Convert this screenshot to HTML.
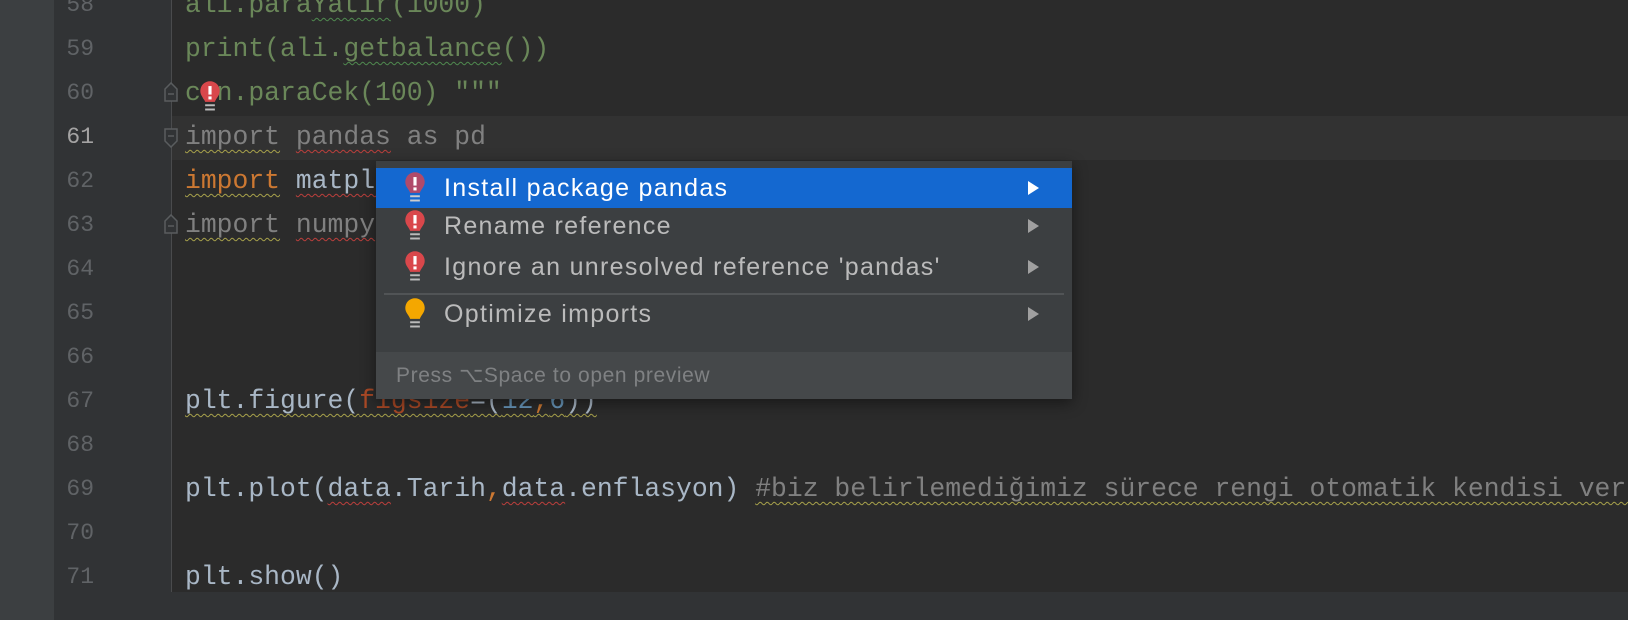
<!DOCTYPE html>
<html><head><meta charset="utf-8"><style>
*{margin:0;padding:0;box-sizing:border-box}
body{width:1628px;height:620px;background:#2b2b2b;position:relative;overflow:hidden;font-family:"Liberation Mono",monospace}
.strip{position:absolute;left:0;top:0;width:54px;height:620px;background:#3c3f41}
.gut{position:absolute;left:54px;top:0;width:118px;height:620px;background:#313335}
.gline{position:absolute;left:171px;top:0;width:1px;height:592px;background:#4a4b4d}
.cur{position:absolute;left:172px;top:116px;width:1456px;height:44px;background:#323232}
.bar{position:absolute;left:54px;top:592px;width:1574px;height:28px;background:#313335}
.ln{position:absolute;left:54px;width:40px;text-align:right;font-size:23px;color:#606366;line-height:44px}
.code{position:absolute;left:185px;font-size:26.4px;line-height:44px;white-space:pre;color:#a9b7c6}
.g{color:#6a8759}.gr{color:#808080}.k{color:#cc7832}.n{color:#6897bb}.p{color:#aa4926}
.wr{text-decoration:underline wavy #bc3f3c;text-decoration-thickness:1px;text-underline-offset:5px}
.wy{text-decoration:underline wavy #a8a24b;text-decoration-thickness:1px;text-underline-offset:5px}
.wg{text-decoration:underline wavy #4f8a4f;text-decoration-thickness:1px;text-underline-offset:5px}
.pop{position:absolute;left:376px;top:161px;width:696px;height:238px;background:#3c3f41;box-shadow:0 4px 14px rgba(0,0,0,.45);font-family:"Liberation Sans",sans-serif}
.row{position:absolute;left:0;width:696px;height:40px;color:#bbbbbb;font-size:25px;letter-spacing:1.3px;line-height:40px}
.row .t{position:absolute;left:68px}
.row .a{position:absolute;left:652px;top:13px;width:0;height:0;border-left:11px solid #a0a0a0;border-top:7px solid transparent;border-bottom:7px solid transparent}
.sel{background:#1468d0;color:#fff}
.sel .a{border-left-color:#fff}
.ic{position:absolute;left:28px;top:3px}
.sep{position:absolute;left:8px;top:132px;width:680px;height:2px;background:#515456}
.foot{position:absolute;left:0;top:191px;width:696px;height:47px;background:#45484a;color:#7f8183;font-size:21px;letter-spacing:0.6px;line-height:47px;padding-left:20px}
.fold{position:absolute;left:164px;width:14px;height:20px}
</style></head><body>
<div class="strip"></div><div class="gut"></div><div class="cur"></div><div class="gline"></div><div class="bar"></div>

<div class="ln" style="top:-17px">58</div>
<div class="ln" style="top:27px">59</div>
<div class="ln" style="top:71px">60</div>
<div class="ln" style="top:115px;color:#a4a3a3">61</div>
<div class="ln" style="top:159px">62</div>
<div class="ln" style="top:203px">63</div>
<div class="ln" style="top:247px">64</div>
<div class="ln" style="top:291px">65</div>
<div class="ln" style="top:335px">66</div>
<div class="ln" style="top:379px">67</div>
<div class="ln" style="top:423px">68</div>
<div class="ln" style="top:467px">69</div>
<div class="ln" style="top:511px">70</div>
<div class="ln" style="top:555px">71</div>

<svg class="fold" style="top:82px" viewBox="0 0 14 20"><path d="M1 19V7L7 1L13 7V19Z" fill="#313335" stroke="#5a5d5f" stroke-width="1.5"/><path d="M4 12H10" stroke="#5a5d5f" stroke-width="1.5"/></svg>
<svg class="fold" style="top:128px" viewBox="0 0 14 20"><path d="M1 1V13L7 19L13 13V1Z" fill="#313335" stroke="#5a5d5f" stroke-width="1.5"/><path d="M4 8H10" stroke="#5a5d5f" stroke-width="1.5"/></svg>
<svg class="fold" style="top:214px" viewBox="0 0 14 20"><path d="M1 19V7L7 1L13 7V19Z" fill="#313335" stroke="#5a5d5f" stroke-width="1.5"/><path d="M4 12H10" stroke="#5a5d5f" stroke-width="1.5"/></svg>

<div class="code g" style="top:-17px">ali.para<span class="wg">Yatir</span>(1000)</div>
<div class="code g" style="top:27px">print(ali.<span class="wg">getbalance</span>())</div>
<div class="code g" style="top:71px">can.paraCek(100) """</div>
<svg style="position:absolute;left:199px;top:80px" width="22" height="34" viewBox="0 0 18 28"><path d="M9 1a8 8 0 0 0-8 8c0 4 3 6 4 9h8c1-3 4-5 4-9a8 8 0 0 0-8-8z" fill="#d9474b"/><rect x="7.7" y="5" width="2.6" height="7" fill="#fff"/><rect x="7.7" y="13.5" width="2.6" height="2.5" fill="#fff"/><rect x="5" y="20" width="8" height="1.6" fill="#bbb"/><rect x="5" y="23.5" width="8" height="1.6" fill="#bbb"/></svg>
<div class="code gr" style="top:115px"><span class="wy">import</span> <span class="wr">pandas</span> as pd</div>
<div class="code" style="top:159px"><span class="k wy">import</span> <span class="wr">matplotlib</span></div>
<div class="code gr" style="top:203px"><span class="wy">import</span> <span class="wr">numpy</span></div>
<div class="code" style="top:379px"><span class="wy">plt.figure(<span class="p">figsize</span>=(<span class="n">12</span><span class="k">,</span><span class="n">6</span>))</span></div>
<div class="code" style="top:467px">plt.plot(<span class="wr">data</span>.Tarih<span class="k">,</span><span class="wr">data</span>.enflasyon) <span class="gr wy">#biz belirlemediğimiz sürece rengi otomatik kendisi verir</span></div>
<div class="code" style="top:555px">plt.show()</div>

<div class="pop">
 <div class="row sel" style="top:7px"><svg class="ic" width="22" height="34" viewBox="0 0 18 28"><path d="M9 1a8 8 0 0 0-8 8c0 4 3 6 4 9h8c1-3 4-5 4-9a8 8 0 0 0-8-8z" fill="#b04a6a"/><rect x="7.7" y="5" width="2.6" height="7" fill="#fff"/><rect x="7.7" y="13.5" width="2.6" height="2.5" fill="#fff"/><rect x="5" y="20" width="8" height="1.6" fill="#ccc"/><rect x="5" y="23.5" width="8" height="1.6" fill="#ccc"/></svg><span class="t">Install package pandas</span><span class="a"></span></div>
 <div class="row" style="top:45px"><svg class="ic" width="22" height="34" viewBox="0 0 18 28"><path d="M9 1a8 8 0 0 0-8 8c0 4 3 6 4 9h8c1-3 4-5 4-9a8 8 0 0 0-8-8z" fill="#d9474b"/><rect x="7.7" y="5" width="2.6" height="7" fill="#fff"/><rect x="7.7" y="13.5" width="2.6" height="2.5" fill="#fff"/><rect x="5" y="20" width="8" height="1.6" fill="#bbb"/><rect x="5" y="23.5" width="8" height="1.6" fill="#bbb"/></svg><span class="t">Rename reference</span><span class="a"></span></div>
 <div class="row" style="top:86px"><svg class="ic" width="22" height="34" viewBox="0 0 18 28"><path d="M9 1a8 8 0 0 0-8 8c0 4 3 6 4 9h8c1-3 4-5 4-9a8 8 0 0 0-8-8z" fill="#d9474b"/><rect x="7.7" y="5" width="2.6" height="7" fill="#fff"/><rect x="7.7" y="13.5" width="2.6" height="2.5" fill="#fff"/><rect x="5" y="20" width="8" height="1.6" fill="#bbb"/><rect x="5" y="23.5" width="8" height="1.6" fill="#bbb"/></svg><span class="t">Ignore an unresolved reference 'pandas'</span><span class="a"></span></div>
 <div class="sep"></div>
 <div class="row" style="top:133px"><svg class="ic" width="22" height="34" viewBox="0 0 18 28"><path d="M9 1a8 8 0 0 0-8 8c0 4 3 6 4 9h8c1-3 4-5 4-9a8 8 0 0 0-8-8z" fill="#f4a700"/><rect x="5" y="20" width="8" height="1.6" fill="#bbb"/><rect x="5" y="23.5" width="8" height="1.6" fill="#bbb"/></svg><span class="t">Optimize imports</span><span class="a"></span></div>
 <div class="foot">Press ⌥Space to open preview</div>
</div>
</body></html>
